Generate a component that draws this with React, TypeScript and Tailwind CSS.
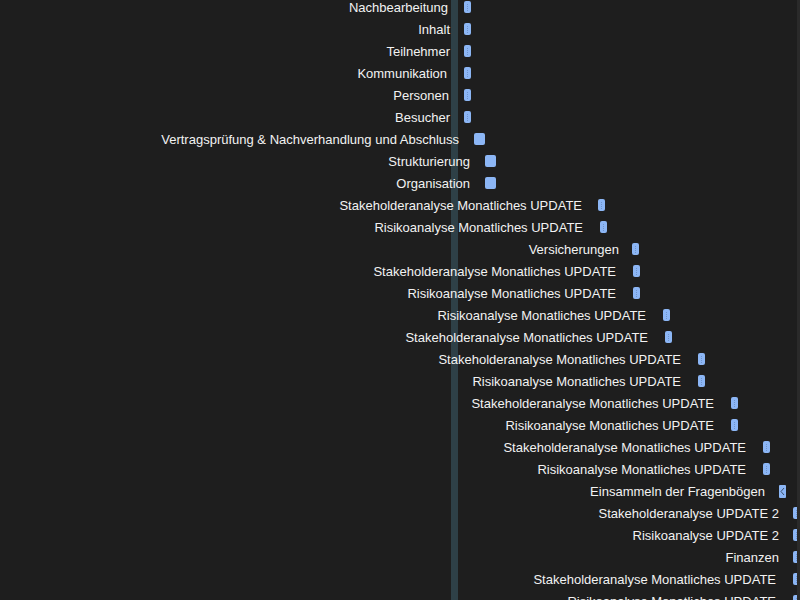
import React from "react";

type Row = { label: string; right: number; bar: number; kind: "thin" | "wide" | "chev" };

const rows: Row[] = [
  { label: "Nachbearbeitung", right: 448, bar: 464, kind: "thin" },
  { label: "Inhalt", right: 450, bar: 464, kind: "thin" },
  { label: "Teilnehmer", right: 450, bar: 464, kind: "thin" },
  { label: "Kommunikation", right: 447, bar: 464, kind: "thin" },
  { label: "Personen", right: 449, bar: 464, kind: "thin" },
  { label: "Besucher", right: 450, bar: 464, kind: "thin" },
  { label: "Vertragsprüfung & Nachverhandlung und Abschluss", right: 459, bar: 474, kind: "wide" },
  { label: "Strukturierung", right: 470, bar: 485, kind: "wide" },
  { label: "Organisation", right: 470, bar: 485, kind: "wide" },
  { label: "Stakeholderanalyse Monatliches UPDATE", right: 582, bar: 598, kind: "thin" },
  { label: "Risikoanalyse Monatliches UPDATE", right: 583, bar: 600, kind: "thin" },
  { label: "Versicherungen", right: 619, bar: 632, kind: "thin" },
  { label: "Stakeholderanalyse Monatliches UPDATE", right: 616, bar: 633, kind: "thin" },
  { label: "Risikoanalyse Monatliches UPDATE", right: 616, bar: 633, kind: "thin" },
  { label: "Risikoanalyse Monatliches UPDATE", right: 646, bar: 663, kind: "thin" },
  { label: "Stakeholderanalyse Monatliches UPDATE", right: 648, bar: 665, kind: "thin" },
  { label: "Stakeholderanalyse Monatliches UPDATE", right: 681, bar: 698, kind: "thin" },
  { label: "Risikoanalyse Monatliches UPDATE", right: 681, bar: 698, kind: "thin" },
  { label: "Stakeholderanalyse Monatliches UPDATE", right: 714, bar: 731, kind: "thin" },
  { label: "Risikoanalyse Monatliches UPDATE", right: 714, bar: 731, kind: "thin" },
  { label: "Stakeholderanalyse Monatliches UPDATE", right: 746, bar: 763, kind: "thin" },
  { label: "Risikoanalyse Monatliches UPDATE", right: 746, bar: 763, kind: "thin" },
  { label: "Einsammeln der Fragenbögen", right: 765, bar: 779, kind: "chev" },
  { label: "Stakeholderanalyse UPDATE 2", right: 779, bar: 793, kind: "thin" },
  { label: "Risikoanalyse UPDATE 2", right: 779, bar: 793, kind: "thin" },
  { label: "Finanzen", right: 779, bar: 793, kind: "thin" },
  { label: "Stakeholderanalyse Monatliches UPDATE", right: 776, bar: 793, kind: "thin" },
  { label: "Risikoanalyse Monatliches UPDATE", right: 776, bar: 793, kind: "thin" },
];

function Bar({ kind }: { kind: Row["kind"] }) {
  if (kind === "wide") {
    return <div className="w-[11px] h-[12px] rounded-[2px] bg-[#8cb6f5] shrink-0" />;
  }
  if (kind === "chev") {
    return (
      <div className="w-[7px] h-[13px] rounded-[1px] bg-[#8cb6f5] shrink-0 flex items-center justify-center">
        <svg width="5" height="9" viewBox="0 0 5 9">
          <path d="M4 1 L1 4.5 L4 8" fill="none" stroke="#3a4e6e" strokeWidth="1" />
        </svg>
      </div>
    );
  }
  return (
    <div className="w-[7px] h-[12px] rounded-[2px] bg-[#8cb6f5] shrink-0 flex justify-center items-center">
      <div className="w-px h-[7px] border-l border-dotted border-[#6e93cc]" />
    </div>
  );
}

export default function App() {
  return (
    <div
      className="relative w-[800px] h-[600px] overflow-hidden bg-[#1e1e1e]"
      style={{ fontFamily: '"Liberation Sans", Arial, sans-serif' }}
    >
      <div className="absolute left-[451px] top-0 w-[7px] h-[600px] bg-[#2e4047]" />
      <div className="relative flex flex-col -mt-[4px]">
        {rows.map((r, i) => (
          <div key={i} className="h-[22px] flex items-center">
            <div
              className="text-right whitespace-nowrap text-[13px] text-[#f2f2f2] leading-[22px] pt-px shrink-0"
              style={{ width: r.right }}
            >
              {r.label}
            </div>
            <div className="shrink-0" style={{ width: r.bar - r.right }} />
            <Bar kind={r.kind} />
          </div>
        ))}
      </div>
      <div className="absolute right-0 top-0 w-[3px] h-[600px] bg-[#2a2a2a]" />
    </div>
  );
}
